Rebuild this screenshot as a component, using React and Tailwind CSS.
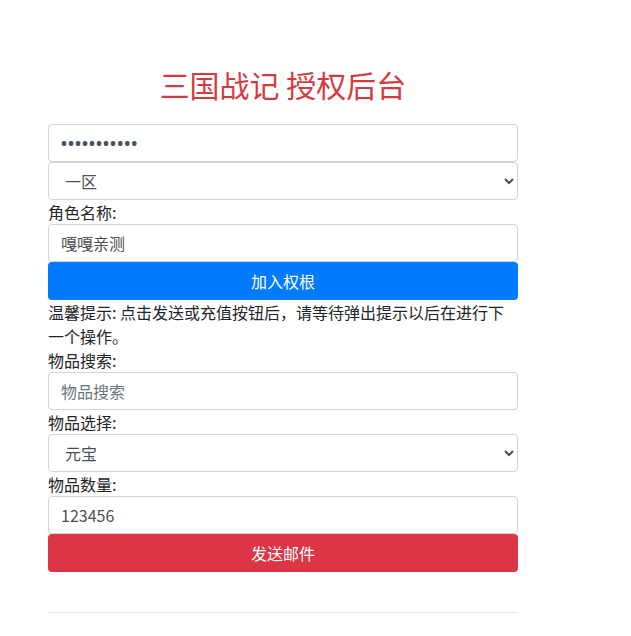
import React from "react";

const font = { fontFamily: '"Noto Sans CJK SC", "Noto Sans", sans-serif' };

const inputCls =
  "block w-full h-[38px] px-3 text-base text-[#495057] bg-white border border-[#ced4da] rounded-[4px] outline-none";

export default function App() {
  return (
    <div className="min-h-screen bg-white text-[#212529]" style={font}>
      <div className="ml-[48px] w-[470px] pt-[66px]">
        <h2 className="text-center text-[30px] leading-[36px] text-[#d63a41] mb-[22px]">
          三国战记 授权后台
        </h2>
        <input
          type="password"
          defaultValue="12345678901"
          className={inputCls + " font-['Noto_Sans',sans-serif] tracking-[1px] font-bold"}
        />
        <select className={inputCls} defaultValue="1">
          <option value="1">一区</option>
        </select>
        <label className="block text-base leading-6">角色名称:</label>
        <input type="text" defaultValue="嘎嘎亲测" className={inputCls} />
        <button className="block w-full h-[38px] text-base text-white bg-[#007bff] rounded-[4px]">
          加入权根
        </button>
        <p className="text-base leading-6">
          温馨提示: 点击发送或充值按钮后，请等待弹出提示以后在进行下一个操作。
        </p>
        <label className="block text-base leading-6">物品搜索:</label>
        <input
          type="text"
          placeholder="物品搜索"
          className={inputCls + " placeholder:text-[#6c757d]"}
        />
        <label className="block text-base leading-6">物品选择:</label>
        <select className={inputCls} defaultValue="yb">
          <option value="yb">元宝</option>
        </select>
        <label className="block text-base leading-6">物品数量:</label>
        <input
          type="text"
          defaultValue="123456"
          className={inputCls + " border-[#80bdff]"}
        />
        <button className="block w-full h-[38px] text-base text-white bg-[#dc3545] rounded-[4px]">
          发送邮件
        </button>
        <hr className="mt-[40px] border-t border-[rgba(0,0,0,0.1)]" />
      </div>
    </div>
  );
}
